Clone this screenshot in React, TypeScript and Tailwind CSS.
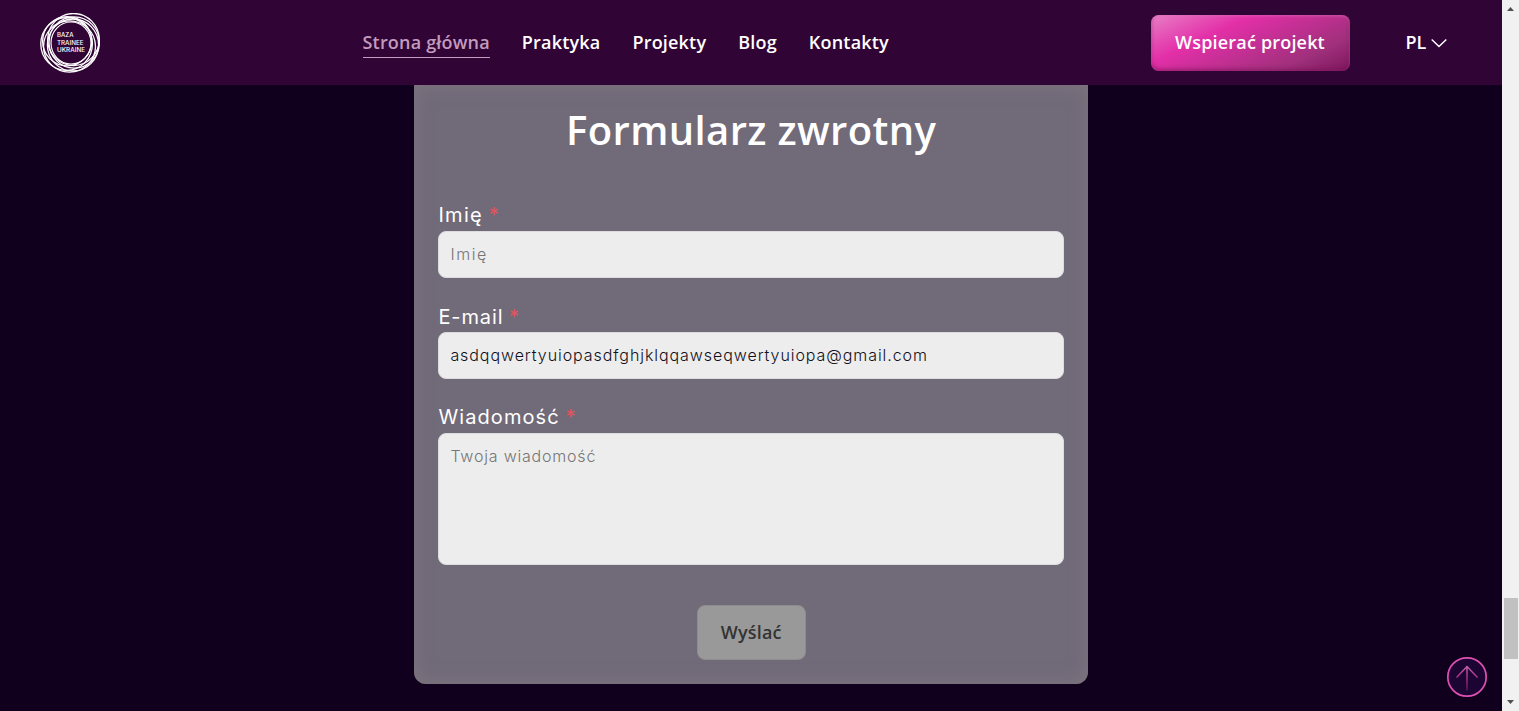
import React from "react";

const navItems = ["Praktyka", "Projekty", "Blog", "Kontakty"];

function Logo() {
  return (
    <svg className="h-[60px] w-[60px]" viewBox="0 0 60 60" fill="none" stroke="#fff">
      <ellipse cx="33.5" cy="26.5" rx="25.8" ry="26" strokeWidth="1.3" />
      <ellipse cx="34.2" cy="29.5" rx="25.2" ry="25.6" strokeWidth="1.3" />
      <ellipse cx="33" cy="32" rx="25.6" ry="26" strokeWidth="1.3" />
      <ellipse cx="29.5" cy="33.5" rx="26" ry="25.6" strokeWidth="1.3" />
      <ellipse cx="26.6" cy="31" rx="25.8" ry="26.3" strokeWidth="1.3" />
      <ellipse cx="27.2" cy="28.2" rx="24.6" ry="24.6" strokeWidth="1.3" />
      <ellipse cx="31" cy="30" rx="20" ry="21" strokeWidth="1.2" />
      <g fill="#fff" stroke="none" fontFamily="Inter, sans-serif" fontSize="6" fontWeight="500">
        <text x="17" y="24" textLength="16.5" lengthAdjust="spacingAndGlyphs">BAZA</text>
        <text x="17" y="31.5" textLength="26.5" lengthAdjust="spacingAndGlyphs">TRAINEE</text>
        <text x="17" y="39" textLength="28" lengthAdjust="spacingAndGlyphs">UKRAINE</text>
      </g>
    </svg>
  );
}

function Label({ text, id, tracking }: { text: string; id: string; tracking: string }) {
  return (
    <label htmlFor={id} className="block text-[20px] leading-6 text-white">
      <span className={tracking}>{text}</span> <span className="text-[#e4545e]">*</span>
    </label>
  );
}

const field =
  "block w-full rounded-lg border border-[#dcdbdd] bg-[#ededed] px-[11px] text-[16px] font-light text-[#10101c] outline-none placeholder:text-[#757575]";

export default function App() {
  return (
    <div className="flex h-[711px] w-[1519px] overflow-hidden bg-[#10001d] font-['Open_Sans',sans-serif]">
      <div className="relative flex w-[1502px] flex-col">
        <header className="flex h-[85px] shrink-0 items-center bg-[#300435] pl-10 text-[18px] font-semibold text-white">
          <Logo />
          <nav className="ml-[262.5px] flex w-[788px] gap-8 leading-6 tracking-[0.19px]">
            <a className="h-[30px] border-b border-[#c39bbd] pt-[2px] text-[#c39bbd]">Strona główna</a>
            {navItems.map((item) => (
              <a key={item} className="pt-[2px]">{item}</a>
            ))}
          </nav>
          <button className="h-[56px] w-[199px] shrink-0 rounded-lg bg-[linear-gradient(155deg,#e87fc6_0%,#e32fa8_32%,#a0307c_77%,#7c175b_100%)] tracking-[0.18px] shadow-[inset_0_-2px_4px_#790d5699,inset_0_1px_3px_#f08bd080]">
            Wspierać projekt
          </button>
          <div className="ml-14 flex items-center gap-[5px]">
            PL
            <svg className="h-4 w-4" viewBox="0 0 16 16" fill="none" stroke="#fff" strokeWidth="1.5">
              <path d="M.7 4.5 8 11.5 15.3 4.5" />
            </svg>
          </div>
        </header>
        <main className="ml-[414.4px] flex h-[599px] w-[673.6px] flex-col rounded-b-xl bg-[#716a78] px-6 shadow-[inset_0_0_18px_#7e7780]">
          <h1 className="mt-[18px] text-center text-[40px] leading-[54px] font-semibold tracking-[0.38px] text-white">Formularz zwrotny</h1>
          <form className="flex flex-col font-['Inter',sans-serif]">
            <div className="mt-[46px]">
              <Label id="name" text="Imię" tracking="tracking-[1.3px]" />
              <input id="name" placeholder="Imię" className={`${field} mt-[4px] h-[47px] pb-px tracking-[1.6px]`} />
            </div>
            <div className="mt-[27px]">
              <Label id="email" text="E-mail" tracking="tracking-[0.9px]" />
              <input id="email" defaultValue="asdqqwertyuiopasdfghjklqqawseqwertyuiopa@gmail.com" className={`${field} mt-[3px] h-[47px] pb-px tracking-[0.93px]`} />
            </div>
            <div className="mt-[26px]">
              <Label id="message" text="Wiadomość" tracking="tracking-[1.1px]" />
              <textarea id="message" placeholder="Twoja wiadomość" className={`${field} mt-[4px] h-[132px] resize-none pt-[10px] leading-6 tracking-[0.8px]`} />
            </div>
            <button className="mx-auto mt-10 h-[55px] w-[109px] rounded-lg border border-[#8e8c90] bg-[#999] font-['Open_Sans',sans-serif] text-[18px] font-[560] tracking-[0.2px] text-[#333]">
              Wyślać
            </button>
          </form>
        </main>
        <button className="absolute top-[656px] left-[1446px] h-[42px] w-[42px]" aria-label="Up">
          <svg viewBox="0 0 42 42" fill="none" className="h-full w-full">
            <defs>
              <linearGradient id="arrow" x1="0" y1="9" x2="0" y2="35" gradientUnits="userSpaceOnUse">
                <stop stopColor="#c268ae" />
                <stop offset=".5" stopColor="#ab2c87" />
                <stop offset="1" stopColor="#5b1255" />
              </linearGradient>
            </defs>
            <circle cx="21" cy="21" r="19.2" fill="#1c0433" stroke="#df50b2" strokeWidth="1.7" />
            <path d="M21 10V34.5M10.5 21.5 21 10.5 31.5 21.5" stroke="url(#arrow)" strokeWidth="1.5" />
          </svg>
        </button>
      </div>
      <div className="flex w-[17px] flex-col items-center bg-[#f1f1f1]">
        <svg className="h-[17px] w-[17px]" viewBox="0 0 17 17"><path d="M5 11h7L8.5 7z" fill="#505050" /></svg>
        <div className="mt-[581px] ml-px h-[61px] w-[14px] bg-[#c1c1c1]" />
        <svg className="mt-auto h-[17px] w-[17px]" viewBox="0 0 17 17"><path d="M5 6h7L8.5 10z" fill="#505050" /></svg>
      </div>
    </div>
  );
}
